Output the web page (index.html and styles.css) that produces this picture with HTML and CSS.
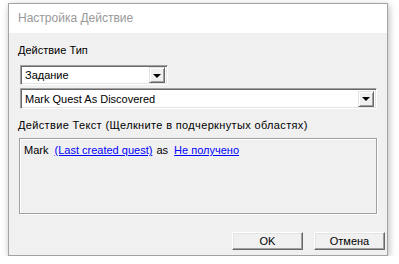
FILE: index.html
```html
<!DOCTYPE html>
<html lang="ru">
<head>
  <meta charset="UTF-8">
  <title>Настройка Действие</title>
  <link rel="stylesheet" href="styles.css">
</head>
<body>
  <div class="window">
    <div class="titlebar">Настройка Действие</div>
    <div class="client">
      <div class="label">Действие Тип</div>
      <div class="combo combo-short">
        <span class="combo-text">Задание</span>
        <span class="combo-btn"><span class="arrow"></span></span>
      </div>
      <div class="combo combo-long">
        <span class="combo-text">Mark Quest As Discovered</span>
        <span class="combo-btn"><span class="arrow"></span></span>
      </div>
      <div class="label label-text">Действие Текст (Щелкните в подчеркнутых областях)</div>
      <div class="textbox">
        <span class="word">Mark</span>
        <a class="link" href="#">(Last created quest)</a>
        <span class="word">as</span>
        <a class="link" href="#">Не получено</a>
      </div>
      <div class="buttons">
        <button class="btn">OK</button>
        <button class="btn">Отмена</button>
      </div>
    </div>
  </div>
</body>
</html>
```

FILE: styles.css
```css
body {
  margin: 0;
  padding: 0;
  background-color: #ffffff;
  font-family: "Liberation Sans", Arial, sans-serif;
  font-size: 11px;
  color: #000;
}
.window {
  margin: 3px 0 0 8px;
  width: 378px;
  height: 251px;
  border: 1px solid #a3a3a3;
  box-shadow: 1px 2px 7px rgba(0,0,0,0.28);
  display: flex;
  flex-direction: column;
}
.titlebar {
  height: 29px;
  line-height: 29px;
  padding-left: 9px;
  background-color: #fff;
  color: #999;
  font-size: 12px;
}
.client {
  flex: 1;
  background-color: #f0f0f0;
  padding: 11px 0 0 9px;
  display: flex;
  flex-direction: column;
  align-items: flex-start;
}
.label {
  height: 13px;
  line-height: 13px;
}
.label-text {
  margin-top: 10px;
  letter-spacing: 0.35px;
}
.combo {
  margin-left: 2px;
  height: 20px;
  box-sizing: border-box;
  background-color: #fff;
  border-top: 1px solid #a0a0a0;
  border-left: 1px solid #a0a0a0;
  border-bottom: 1px solid #fff;
  border-right: 1px solid #fff;
  box-shadow: inset 1px 1px 0 #696969, inset -1px -1px 0 #e3e3e3;
  display: flex;
  align-items: center;
  padding: 2px;
}
.combo-short {
  width: 148px;
  margin-top: 8px;
}
.combo-long {
  width: 357px;
  height: 21px;
  margin-top: 3px;
}
.combo-text {
  flex: 1;
  padding-left: 2px;
  line-height: 14px;
}
.combo-btn {
  width: 16px;
  height: 16px;
  box-sizing: border-box;
  background-color: #f0f0f0;
  border-top: 1px solid #e3e3e3;
  border-left: 1px solid #e3e3e3;
  border-bottom: 1px solid #696969;
  border-right: 1px solid #696969;
  box-shadow: inset 1px 1px 0 #fff, inset -1px -1px 0 #a0a0a0;
  display: flex;
  align-items: center;
  justify-content: center;
}
.arrow {
  width: 0;
  height: 0;
  border-left: 4px solid transparent;
  border-right: 4px solid transparent;
  border-top: 4px solid #000;
  margin-top: 1px;
}
.textbox {
  margin-top: 6px;
  margin-left: 1px;
  width: 358px;
  height: 76px;
  box-sizing: border-box;
  border: 1px solid #a0a0a0;
  box-shadow: 1px 1px 0 #fff, inset 1px 1px 0 #fff;
  padding: 4px 4px;
  line-height: 14px;
}
.word {
  margin-right: 3px;
}
.link {
  color: #0000ff;
  text-decoration: underline;
  margin-right: 1px;
}
.buttons {
  margin-top: 18px;
  align-self: stretch;
  display: flex;
  justify-content: flex-end;
  gap: 11px;
  padding-right: 2px;
}
.btn {
  width: 71px;
  height: 18px;
  padding: 0;
  font-family: "Liberation Sans", Arial, sans-serif;
  font-size: 11px;
  color: #000;
  background-color: #f0f0f0;
  border-top: 1px solid #fff;
  border-left: 1px solid #fff;
  border-bottom: 1px solid #696969;
  border-right: 1px solid #696969;
  box-shadow: inset -1px -1px 0 #a0a0a0, inset 1px 1px 0 #e3e3e3;
}
```
